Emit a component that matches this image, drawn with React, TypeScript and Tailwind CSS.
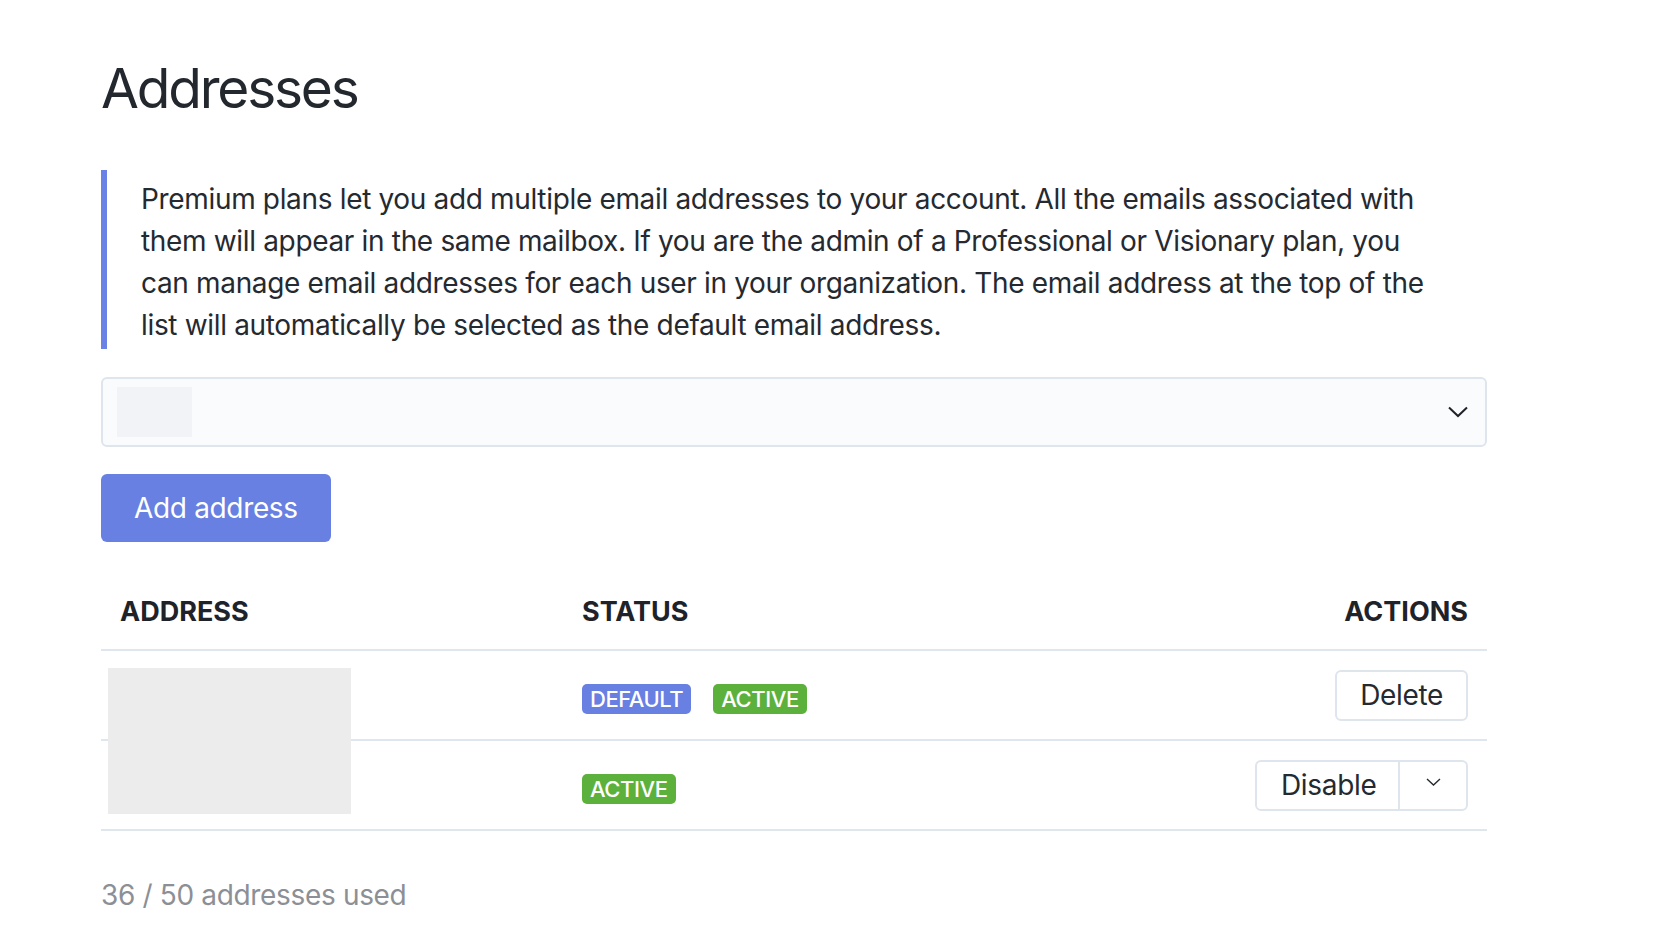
type Row = {
  badges: { label: string; tone: 'blue' | 'green' }[];
  action: 'delete' | 'disable';
};

const rows: Row[] = [
  {
    badges: [
      { label: 'DEFAULT', tone: 'blue' },
      { label: 'ACTIVE', tone: 'green' },
    ],
    action: 'delete',
  },
  { badges: [{ label: 'ACTIVE', tone: 'green' }], action: 'disable' },
];

function Badge({ label, tone }: { label: string; tone: 'blue' | 'green' }) {
  return (
    <span
      className={`inline-flex h-[30px] items-center rounded-[5px] px-[8px] text-[22px] font-medium leading-none tracking-[-0.02em] text-white ${
        tone === 'blue' ? 'bg-[#6780e2]' : 'bg-[#5cb13c]'
      }`}
    >
      {label}
    </span>
  );
}

export default function App() {
  return (
    <div className="min-h-screen bg-white font-['Inter','Liberation_Sans',sans-serif] text-[#252930]">
      <div className="ml-[101px] w-[1386px] pt-[55px]">
        <h1 className="text-[55px] leading-[66px] tracking-[-0.04em] text-[#23272e]">Addresses</h1>

        <blockquote className="mt-[49px] border-l-[6px] border-[#6a82e6] pb-[3px] pl-[34px] pr-[40px] pt-[8px] text-[28px] leading-[42px] tracking-[-0.012em]">
          Premium plans let you add multiple email addresses to your account. All the emails associated with
          them will appear in the same mailbox. If you are the admin of a Professional or Visionary plan, you
          can manage email addresses for each user in your organization. The email address at the top of the
          list will automatically be selected as the default email address.
        </blockquote>

        <div className="mt-[28px] flex h-[70px] items-center justify-between rounded-[6px] border-2 border-[#dfe5ec] bg-[#fafbfd] pl-[14px] pr-[17px]">
          <div className="h-[50px] w-[75px] bg-[#f2f3f6]" />
          <svg width="20" height="12" viewBox="0 0 20 12" fill="none" stroke="#1f2329" strokeWidth="2">
            <polyline points="1,1.5 10,10 19,1.5" />
          </svg>
        </div>

        <button className="mt-[27px] h-[68px] rounded-[6px] bg-[#6780e2] px-[33px] text-[28px] tracking-[-0.012em] text-white">
          Add address
        </button>

        <div className="mt-[54px]">
          <div className="grid grid-cols-[481px_1fr_auto] border-b-2 border-[#dfe6ee] pb-[21px] text-[27px] font-bold leading-[32px] text-[#1f2329]">
            <div className="pl-[19px]">ADDRESS</div>
            <div>STATUS</div>
            <div className="pr-[19px] text-right">ACTIONS</div>
          </div>

          <div className="relative">
            {rows.map((row, i) => (
              <div
                key={i}
                className="grid h-[90px] grid-cols-[481px_1fr_auto] items-center border-b-2 border-[#dfe6ee]"
              >
                <div />
                <div className="mt-[7px] flex gap-[22px]">
                  {row.badges.map((b) => (
                    <Badge key={b.label} label={b.label} tone={b.tone} />
                  ))}
                </div>
                <div className="pr-[19px]">
                  {row.action === 'delete' ? (
                    <button className="h-[51px] rounded-[6px] border-2 border-[#dfe5ec] bg-white px-[23px] text-[28px] tracking-[-0.012em] text-[#252930]">
                      Delete
                    </button>
                  ) : (
                    <div className="flex h-[51px] rounded-[6px] border-2 border-[#dfe5ec] bg-white">
                      <button className="w-[143px] border-r-2 border-[#dfe5ec] pl-[24px] text-left text-[28px] tracking-[-0.012em] text-[#252930]">
                        Disable
                      </button>
                      <button className="flex w-[66px] items-start justify-center pt-[16px]">
                        <svg width="15" height="8" viewBox="0 0 15 8" fill="none" stroke="#252930" strokeWidth="1.4">
                          <polyline points="1,1 7.5,7 14,1" />
                        </svg>
                      </button>
                    </div>
                  )}
                </div>
              </div>
            ))}
            {/* redacted address cell, sits over both rows */}
            <div className="absolute left-[7px] top-[17px] h-[146px] w-[243px] bg-[#ececec]" />
          </div>
        </div>

        <p className="mt-[44px] text-[28px] leading-[40px] tracking-[-0.012em] text-[#8c8f95]">36 / 50 addresses used</p>
      </div>
    </div>
  );
}
